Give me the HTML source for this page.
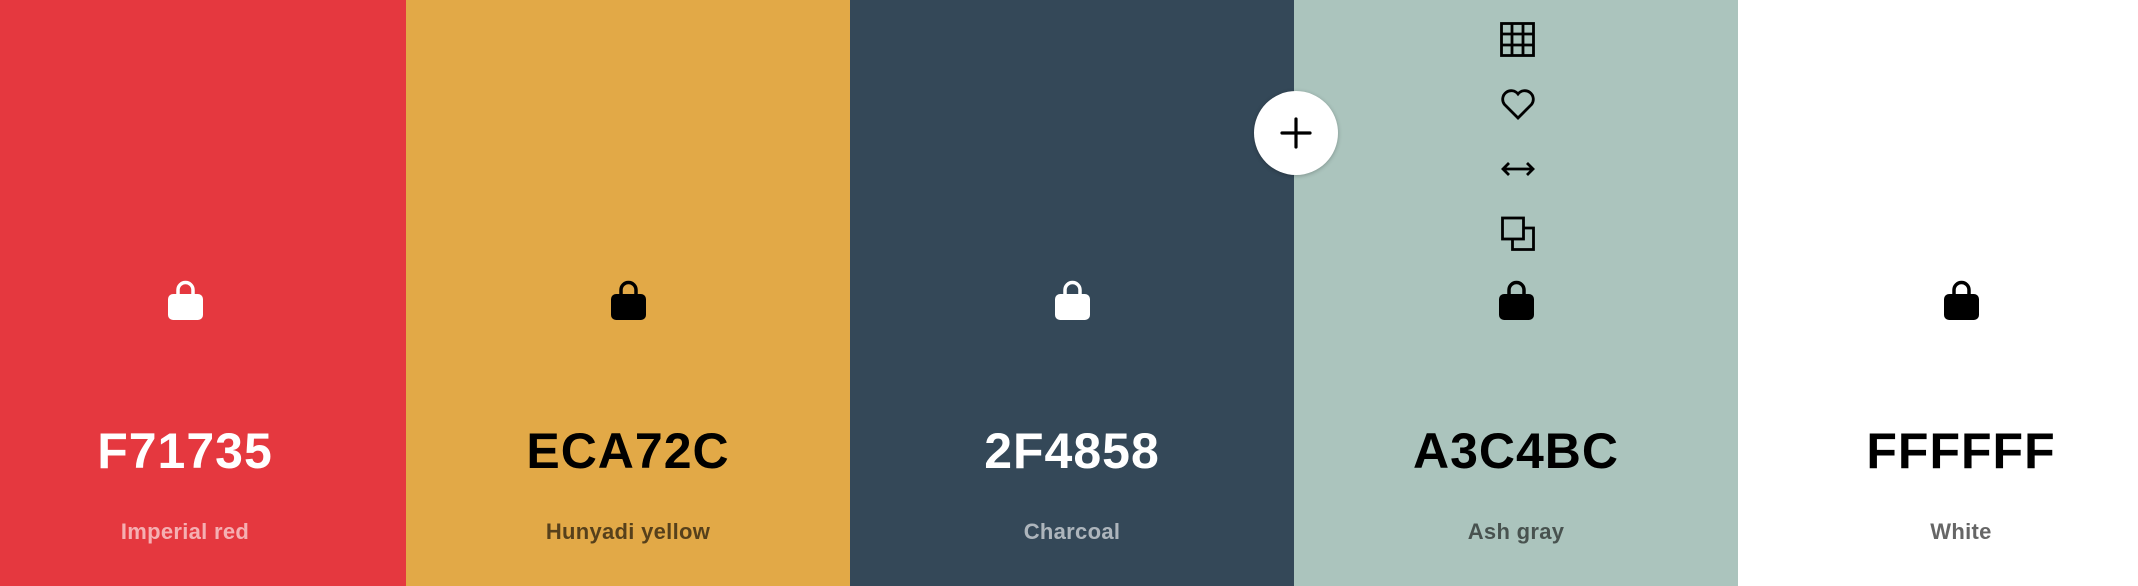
<!DOCTYPE html>
<html><head><meta charset="utf-8"><style>
html,body{margin:0;padding:0;width:2138px;height:586px;overflow:hidden;font-family:"Liberation Sans",sans-serif}
.col{position:absolute;top:0;height:586px;width:444px}
.lock{position:absolute;left:50%;top:277px;width:37px;height:43px;margin-left:-18.5px}
.hex{position:absolute;left:0;right:0;top:421px;text-align:center;font-size:50px;line-height:60px;letter-spacing:1px;font-weight:bold}
.name{position:absolute;left:0;right:0;top:518px;text-align:center;font-size:22px;line-height:28px;font-weight:bold;letter-spacing:0.3px}
.ic{position:absolute;left:1500px;width:36px;height:36px}
</style></head><body>
<div class="col" style="left:-37px;background:#e5383f;color:#fff">
<svg class="lock" viewBox="0 0 37 43"><path d="M11 19V13a7.5 7.5 0 0 1 15 0v6" fill="none" stroke="#fff" stroke-width="3.5"/><rect x="1" y="17" width="35" height="26" rx="5" fill="#fff"/></svg>
<div class="hex">F71735</div><div class="name" style="color:rgba(255,255,255,.6)">Imperial red</div></div>
<div class="col" style="left:406px;background:#e2a947;color:#000">
<svg class="lock" viewBox="0 0 37 43"><path d="M11 19V13a7.5 7.5 0 0 1 15 0v6" fill="none" stroke="#000" stroke-width="3.5"/><rect x="1" y="17" width="35" height="26" rx="5" fill="#000"/></svg>
<div class="hex">ECA72C</div><div class="name" style="color:rgba(0,0,0,.62)">Hunyadi yellow</div></div>
<div class="col" style="left:850px;background:#344858;color:#fff">
<svg class="lock" viewBox="0 0 37 43"><path d="M11 19V13a7.5 7.5 0 0 1 15 0v6" fill="none" stroke="#fff" stroke-width="3.5"/><rect x="1" y="17" width="35" height="26" rx="5" fill="#fff"/></svg>
<div class="hex">2F4858</div><div class="name" style="color:rgba(255,255,255,.6)">Charcoal</div></div>
<div class="col" style="left:1294px;background:#abc4bd;color:#000">
<svg class="lock" viewBox="0 0 37 43"><path d="M11 19V13a7.5 7.5 0 0 1 15 0v6" fill="none" stroke="#000" stroke-width="3.5"/><rect x="1" y="17" width="35" height="26" rx="5" fill="#000"/></svg>
<div class="hex">A3C4BC</div><div class="name" style="color:rgba(0,0,0,.58)">Ash gray</div></div>
<div class="col" style="left:1738px;width:446px;background:#fff;color:#000">
<svg class="lock" viewBox="0 0 37 43"><path d="M11 19V13a7.5 7.5 0 0 1 15 0v6" fill="none" stroke="#000" stroke-width="3.5"/><rect x="1" y="17" width="35" height="26" rx="5" fill="#000"/></svg>
<div class="hex">FFFFFF</div><div class="name" style="color:#666">White</div></div>

<svg class="ic" style="top:22px" viewBox="0 0 36 36" fill="none" stroke="#000" stroke-width="2.8"><rect x="1.5" y="1.5" width="32" height="32"/><path d="M12 1v33M23 1v33M1 12h33M1 23h33"/></svg>
<svg class="ic" style="top:86px" viewBox="0 0 36 36" fill="none" stroke="#000" stroke-width="2.8"><path d="M18 32L4.5 18.5A8.3 8.3 0 0 1 18 8 8.3 8.3 0 0 1 31.5 18.5Z"/></svg>
<svg class="ic" style="top:151px" viewBox="0 0 36 36" fill="none" stroke="#000" stroke-width="2.8"><path d="M3 18h30M9 12l-6 6 6 6M27 12l6 6-6 6"/></svg>
<svg class="ic" style="top:216px" viewBox="0 0 36 36" fill="none" stroke="#000" stroke-width="2.8"><rect x="2.5" y="2" width="21" height="21"/><path d="M23.5 12h10v21.5h-21v-10.5"/></svg>

<div style="position:absolute;left:1254px;top:91px;width:84px;height:84px;border-radius:50%;background:#fff;box-shadow:0 1px 4px rgba(0,0,0,.25)"><svg style="position:absolute;left:26px;top:26px" width="32" height="32" viewBox="0 0 32 32"><path d="M2 16h28M16 2v28" stroke="#000" stroke-width="3.2" stroke-linecap="round"/></svg></div>
</body></html>
